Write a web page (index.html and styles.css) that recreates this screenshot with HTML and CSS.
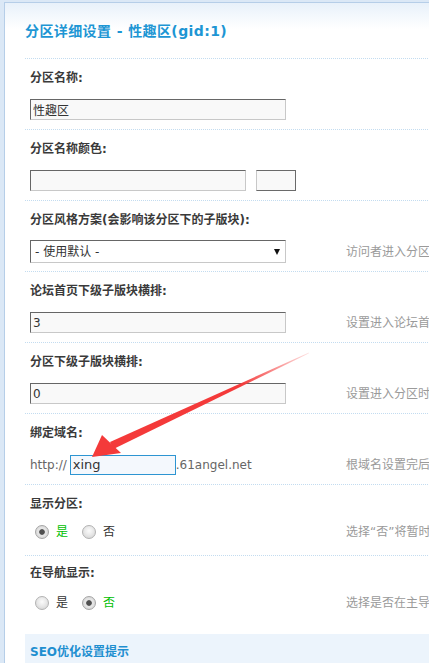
FILE: index.html
```html
<!DOCTYPE html>
<html lang="zh-CN">
<head>
<meta charset="utf-8">
<title>分区详细设置</title>
<link rel="stylesheet" href="styles.css">
</head>
<body>
<div class="main">
  <h3 class="title">分区详细设置 - 性趣区(gid:1)</h3>

  <div class="sec">
    <div class="label">分区名称:</div>
    <div class="field">
      <div class="ctl"><input class="txt" type="text" value="性趣区"></div>
    </div>
  </div>

  <div class="sec">
    <div class="label">分区名称颜色:</div>
    <div class="field">
      <div class="ctl"><input class="txt short" type="text" value=""><span class="swatch"></span></div>
    </div>
  </div>

  <div class="sec">
    <div class="label">分区风格方案(会影响该分区下的子版块):</div>
    <div class="field">
      <div class="ctl">
        <div class="selectbox">
          <select class="sel"><option>- 使用默认 -</option></select>
          <span class="caret"></span>
        </div>
      </div>
      <div class="tip">访问者进入分区后所使用的风格方案</div>
    </div>
  </div>

  <div class="sec">
    <div class="label">论坛首页下级子版块横排:</div>
    <div class="field">
      <div class="ctl"><input class="txt" type="text" value="3"></div>
      <div class="tip">设置进入论坛首页时下级子版块横排</div>
    </div>
  </div>

  <div class="sec">
    <div class="label">分区下级子版块横排:</div>
    <div class="field">
      <div class="ctl"><input class="txt" type="text" value="0"></div>
      <div class="tip">设置进入分区时下级子版块横排</div>
    </div>
  </div>

  <div class="sec">
    <div class="label">绑定域名:</div>
    <div class="field">
      <div class="ctl domain"><span class="dtext">http://</span><input class="txt dom" type="text" value="xing"><span class="dtext">.61angel.net</span></div>
      <div class="tip">根域名设置完后才能使用</div>
    </div>
  </div>

  <div class="sec">
    <div class="label">显示分区:</div>
    <div class="field radios">
      <div class="ctl">
        <label class="opt on"><input class="radio" type="radio" name="show" checked>是</label>
        <label class="opt"><input class="radio" type="radio" name="show">否</label>
      </div>
      <div class="tip">选择“否”将暂时隐藏分区</div>
    </div>
  </div>

  <div class="sec last">
    <div class="label">在导航显示:</div>
    <div class="field radios">
      <div class="ctl">
        <label class="opt"><input class="radio" type="radio" name="nav">是</label>
        <label class="opt on"><input class="radio" type="radio" name="nav" checked>否</label>
      </div>
      <div class="tip">选择是否在主导航中显示</div>
    </div>
  </div>

  <div class="seo">SEO优化设置提示</div>
</div>

<svg class="arrow" width="429" height="663" viewBox="0 0 429 663" xmlns="http://www.w3.org/2000/svg">
  <defs>
    <linearGradient id="fade" gradientUnits="userSpaceOnUse" x1="309" y1="353" x2="240" y2="386">
      <stop offset="0" stop-color="#f43a3a" stop-opacity="0.15"/>
      <stop offset="1" stop-color="#f43a3a" stop-opacity="1"/>
    </linearGradient>
  </defs>
  <polygon points="309,352.6 308.6,353.6 113.5,449 110,442" fill="url(#fade)"/>
  <polygon points="92,457 102,435 121,453" fill="#f43a3a"/>
</svg>
</body>
</html>
```

FILE: styles.css
```css
html, body {
  margin: 0;
  padding: 0;
}

body {
  background: #dbe8f6;
  overflow: hidden;
  width: 429px;
  height: 663px;
  position: relative;
  font: 12px/1.5 "DejaVu Sans", "Noto Sans CJK SC", sans-serif;
  color: #333;
}

.main {
  margin: 2px 0 0 4px;
  border-top: 1px solid #b6cee8;
  border-left: 1px solid #b6cee8;
  background: linear-gradient(#e8f1fa, #ffffff 26px);
  width: 1200px;
  min-height: 700px;
  padding-left: 20px;
  box-sizing: border-box;
}

.title {
  margin: 0;
  height: 56px;
  box-sizing: border-box;
  padding-top: 18px;
  line-height: 20px;
  font-size: 14px;
  font-weight: bold;
  letter-spacing: 0.4px;
  color: #1d96d4;
  border-bottom: 1px dotted #c3dcf0;
}

.sec {
  border-bottom: 1px dotted #c3dcf0;
  padding-left: 5px;
}

.label {
  padding-top: 9px;
  line-height: 20px;
  font-weight: bold;
  color: #3a3a3a;
}

.field {
  display: flex;
  align-items: center;
  height: 21px;
  margin: 11px 0 9px;
}

.field.radios {
  margin: 7px 0 13px;
}

.sec.last {
  border-bottom: none;
  padding-bottom: 8px;
}

.sec.last .label {
  padding-top: 7px;
}

.sec.last .field.radios {
  margin-top: 9px;
}

.ctl {
  width: 316px;
  flex: none;
  display: flex;
  align-items: center;
}

.tip {
  color: #9a9a9a;
  white-space: nowrap;
  padding-top: 1px;
}

.txt {
  width: 256px;
  height: 21px;
  box-sizing: border-box;
  margin: 0;
  padding: 0 2px;
  border: 1px solid #c8c8c8;
  border-top-color: #666;
  border-left-color: #666;
  background: #f9f9f9;
  font: 12px "DejaVu Sans", "Noto Sans CJK SC", sans-serif;
  color: #333;
  outline: none;
}

.txt.short {
  width: 216px;
}

.swatch {
  display: inline-block;
  width: 40px;
  height: 21px;
  box-sizing: border-box;
  margin-left: 10px;
  border: 1px solid #6a6a6a;
  border-left-color: #c8c8c8;
  background: #f9f9f9;
}

.selectbox {
  position: relative;
  width: 256px;
  height: 23px;
}

.sel {
  appearance: none;
  -webkit-appearance: none;
  width: 256px;
  height: 23px;
  box-sizing: border-box;
  margin: 0;
  padding: 0 4px;
  border: 1px solid #c8c8c8;
  border-top-color: #666;
  border-left-color: #666;
  border-radius: 0;
  background: #fff;
  font: 12px "DejaVu Sans", "Noto Sans CJK SC", sans-serif;
  color: #333;
}

.caret {
  position: absolute;
  right: 6px;
  top: 9px;
  width: 0;
  height: 0;
  border-left: 3.5px solid transparent;
  border-right: 3.5px solid transparent;
  border-top: 6px solid #111;
}

.domain .dtext {
  color: #666;
  font-family: "DejaVu Sans", sans-serif;
}

.txt.dom {
  width: 106px;
  height: 20px;
  margin-left: 3px;
  border: 1px solid #2d95d2;
  background: #f4f8fd;
  padding: 0 2px;
  font-size: 13px;
}

.opt {
  display: inline-flex;
  align-items: center;
  margin-left: 5px;
  margin-right: 9px;
  color: #333;
}

.opt.on {
  color: #00c000;
}

.radio {
  appearance: none;
  -webkit-appearance: none;
  width: 14px;
  height: 14px;
  margin: 0 7px 0 0;
  border-radius: 50%;
  border: 1px solid #b2b2b2;
  box-sizing: border-box;
  background: radial-gradient(circle at 50% 40%, #fbfbfb 0, #e9e9e9 45%, #cfcfcf 100%);
}

.radio:checked {
  background: radial-gradient(circle at 50% 50%, #505050 0, #505050 2.4px, #e6e6e6 3.2px, #e2e2e2 55%, #c6c6c6 100%);
  border-color: #a5a5a5;
}

.seo {
  background: #ecf4fc;
  padding: 8px 0 0 5px;
  line-height: 20px;
  height: 40px;
  font-weight: bold;
  color: #1f8fd0;
}

.arrow {
  position: absolute;
  left: 0;
  top: 0;
  pointer-events: none;
}
```
